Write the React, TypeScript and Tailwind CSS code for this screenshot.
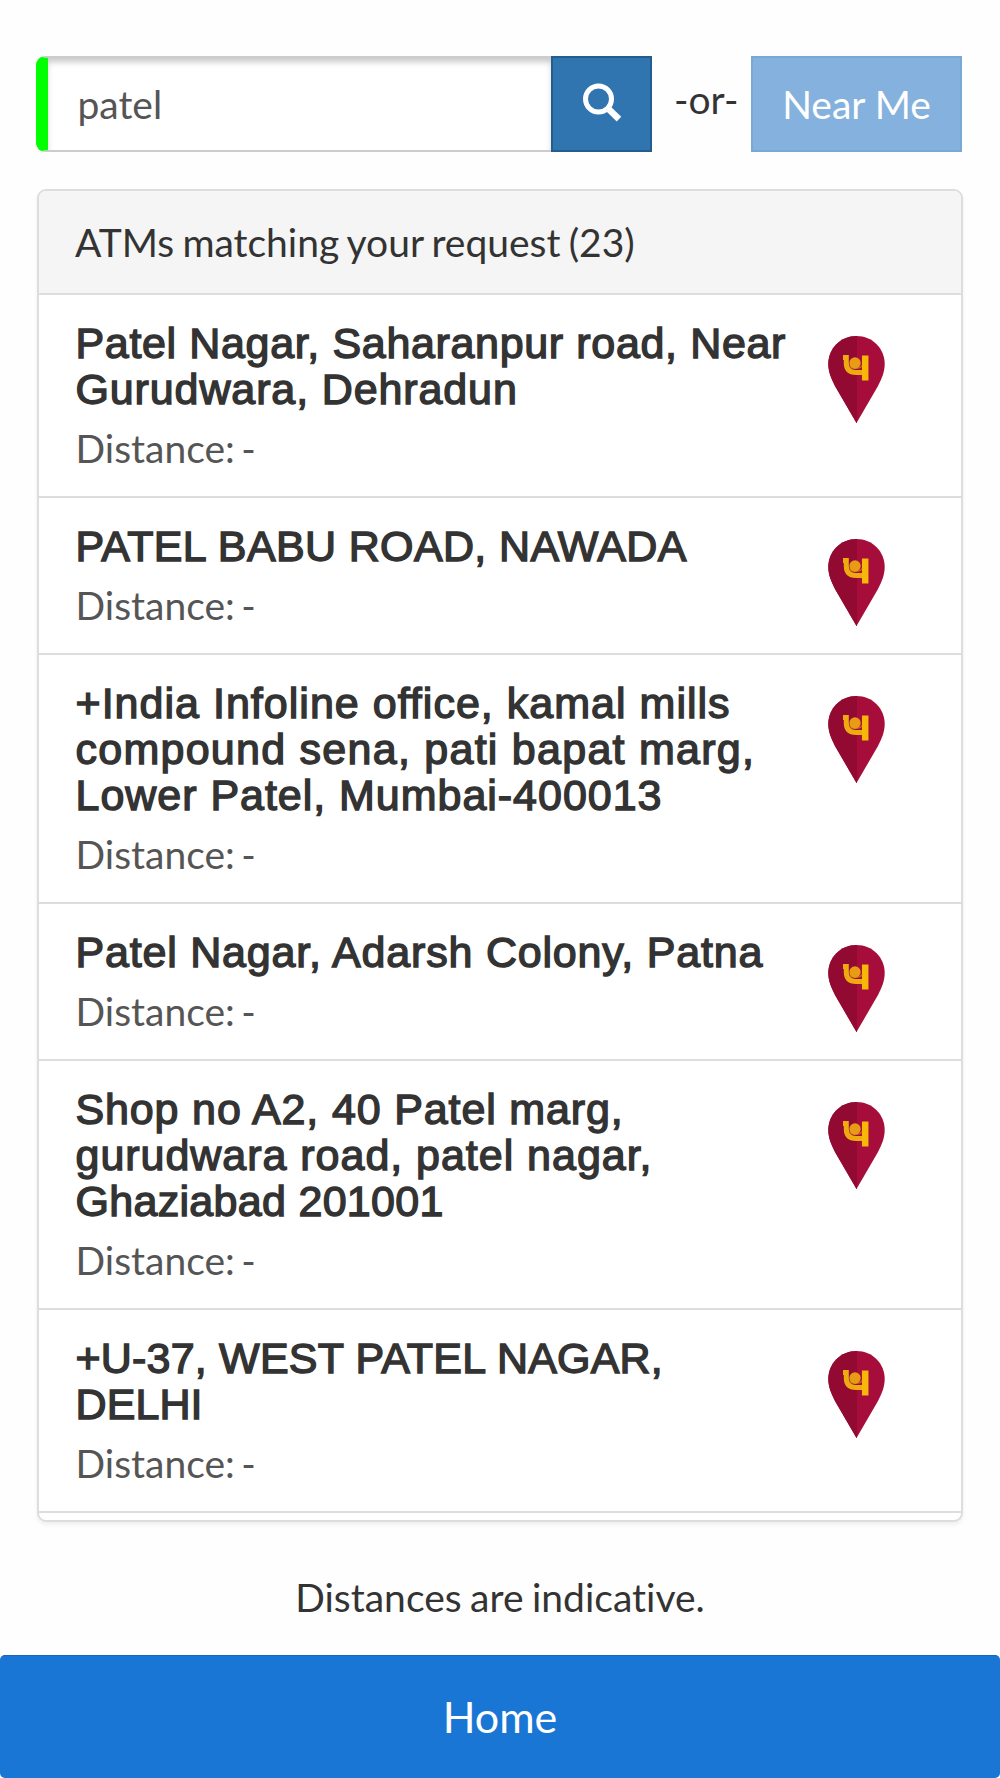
import React, { useState } from "react";

interface AddressLine {
  text: string;
  tracking: string;
}

interface Atm {
  id: number;
  address: AddressLine[];
  distance: string;
}

const atms: Atm[] = [
  {
    id: 1,
    address: [
      { text: "Patel Nagar, Saharanpur road, Near", tracking: "tracking-[0.65px]" },
      { text: "Gurudwara, Dehradun", tracking: "tracking-[0.88px]" },
    ],
    distance: "-",
  },
  {
    id: 2,
    address: [{ text: "PATEL BABU ROAD, NAWADA", tracking: "tracking-[0.36px]" }],
    distance: "-",
  },
  {
    id: 3,
    address: [
      { text: "+India Infoline office, kamal mills", tracking: "tracking-[1.02px]" },
      { text: "compound sena, pati bapat marg,", tracking: "tracking-[1.26px]" },
      { text: "Lower Patel, Mumbai-400013", tracking: "tracking-[0.97px]" },
    ],
    distance: "-",
  },
  {
    id: 4,
    address: [{ text: "Patel Nagar, Adarsh Colony, Patna", tracking: "tracking-[0.8px]" }],
    distance: "-",
  },
  {
    id: 5,
    address: [
      { text: "Shop no A2, 40 Patel marg,", tracking: "tracking-[0.85px]" },
      { text: "gurudwara road, patel nagar,", tracking: "tracking-[0.97px]" },
      { text: "Ghaziabad 201001", tracking: "tracking-[0.3px]" },
    ],
    distance: "-",
  },
  {
    id: 6,
    address: [
      { text: "+U-37, WEST PATEL NAGAR,", tracking: "tracking-[0.2px]" },
      { text: "DELHI", tracking: "tracking-[0.1px]" },
    ],
    distance: "-",
  },
];

function SearchIcon() {
  return (
    <svg className="w-[40px] h-[40px]" viewBox="0 0 40 40" fill="none" stroke="white">
      <circle cx="16.5" cy="16" r="13" strokeWidth="5" />
      <path d="M25.5 25L37 36.2" strokeWidth="6.5" />
    </svg>
  );
}

function BankPin() {
  return (
    <svg className="w-[57px] h-[87px] mt-[16px] shrink-0" viewBox="0 0 57 87">
      <path d="M28.5 0C12.5 0 .3 12.5 .3 28C.3 36 3.5 43 7 50L28.5 87L50 50C53.5 43 56.7 36 56.7 28C56.7 12.5 44.5 0 28.5 0Z" fill="#a60d3a" />
      <path d="M29 0C12.5 0 .3 12.5 .3 28C.3 36 3.5 43 7 50L28.5 87H29Z" fill="#920a31" />
      <g fill="none">
        <path d="M15 21.5H18.3V27C18.3 34 22 36.5 28 36.5H36" stroke="#eeaa10" strokeWidth="5" />
        <path d="M37.2 19.5V44.5" stroke="#f8b80a" strokeWidth="6.5" />
        <path d="M21.5 29.5C23 33.2 32 33.2 34 29.5" stroke="#c56a1c" strokeWidth="1.5" />
      </g>
      <circle cx="27" cy="27" r="5.7" fill="#e89c16" />
    </svg>
  );
}

function AtmRow({ atm }: { atm: Atm }) {
  return (
    <li className="flex justify-between border-b-2 border-[#dddddd] pt-[25px] pb-[21px] pl-[36.5px] pr-[76px]">
      <div>
        <h4 className="font-['Liberation_Sans',sans-serif] text-[43px] leading-[46px] text-[#333333] [-webkit-text-stroke:1.4px_#333333]">
          {atm.address.map((line) => (
            <span key={line.text} className={`block whitespace-nowrap ${line.tracking}`}>{line.text}</span>
          ))}
        </h4>
        <p className="mt-[9px] leading-[54px] text-[#555555] [word-spacing:-3.5px]">Distance: {atm.distance}</p>
      </div>
      <BankPin />
    </li>
  );
}

export default function App() {
  const [query, setQuery] = useState("patel");

  return (
    <div className="flex h-[1778px] w-[1000px] flex-col overflow-hidden bg-[#fefefe] font-['Lato',sans-serif] text-[39px] text-[#333333] [font-variant-ligatures:none]">
      {/* SEARCH BAR */}
      <div className="flex h-[96px] mt-[56px] ml-[36px] mr-[38px] shrink-0">
        <input
          value={query}
          onChange={(e) => setQuery(e.target.value)}
          className="h-[96px] w-[515px] rounded-l-[9px] border-y-2 border-l-[12px] border-y-[#cccccc] border-l-[#00ff00] bg-white pl-[29.5px] text-[39px] text-[#555555] shadow-[inset_0_5px_6px_-1px_rgba(0,0,0,0.22)] outline-none"
        />
        <button className="flex w-[101px] items-center justify-center border-2 border-[#255c8e] bg-[#3175b0] pb-[3px] pl-[1px]">
          <SearchIcon />
        </button>
        <span className="ml-[22px] w-[77px] leading-[87px] whitespace-nowrap">-or-</span>
        <button className="flex-1 border-2 border-[#78a8d5] bg-[#84b1dd] pt-[1px] text-white">Near Me</button>
      </div>

      {/* RESULTS PANEL */}
      <section className="mx-[37px] mt-[37px] h-[1333px] shrink-0 overflow-hidden rounded-[9px] border-2 border-[#dddddd] bg-white shadow-[0_3px_4px_rgba(0,0,0,0.06)]">
        <header className="h-[104px] border-b-2 border-[#dddddd] bg-[#f5f5f5] pl-[36px] leading-[102px] [word-spacing:-1.8px]">
          ATMs matching your request (23)
        </header>
        <ul>
          {atms.map((atm) => (
            <AtmRow key={atm.id} atm={atm} />
          ))}
        </ul>
      </section>

      <p className="mt-[48px] h-[54px] shrink-0 text-center leading-[54px] [word-spacing:-1.5px]">Distances are indicative.</p>

      <button className="mt-auto h-[123px] w-full shrink-0 rounded-[5px] border-t border-[#1768bd] bg-[#1a76d4] pt-[1px] text-[43px] text-white">
        Home
      </button>
    </div>
  );
}
